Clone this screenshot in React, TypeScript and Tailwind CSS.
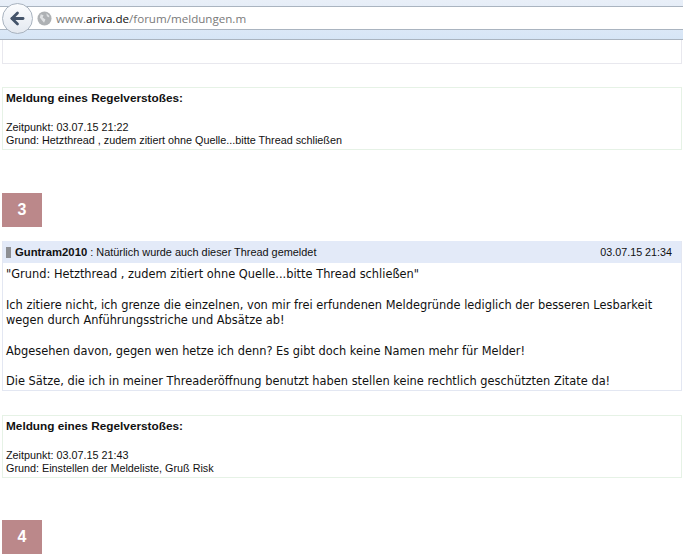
import { ArrowLeft } from "lucide-react";

const sans = "font-['Liberation_Sans',Arial,sans-serif]";

function Report({ time, reason }: { time: string; reason: string }) {
  return (
    <div className={`ml-[2px] mr-[1px] h-[63px] border border-[#e6f2e6] px-[3px] pt-[3px] text-[10.8px] leading-[13px] text-[#111] ${sans}`}>
      <div className="text-[11.8px] font-bold leading-[14px]">Meldung eines Regelverstoßes:</div>
      <div className="mt-[16px]">Zeitpunkt: {time}</div>
      <div>Grund: {reason}</div>
    </div>
  );
}

function Badge({ n }: { n: number }) {
  return (
    <div className={`ml-[2px] flex h-[34px] w-[40px] items-center justify-center bg-[#bb888a] text-[16px] font-bold text-white ${sans}`}>
      {n}
    </div>
  );
}

export default function App() {
  return (
    <div className="h-[559px] w-[683px] overflow-hidden bg-white">
      {/* browser bar */}
      <div className="relative h-[40px] bg-gradient-to-b from-[#e9eff8] to-[#d6e5f6] pt-[6px]">
        <div className="flex h-[24px] items-center border-y border-[#aab4c0] bg-white pl-[37px]">
          <svg width="15" height="15" viewBox="0 0 16 16" className="mr-[4px]">
            <circle cx="8" cy="8" r="7.5" fill="#aeb1b4" />
            <path d="M4 3.5l3 1-1 2.5 3 2-1.5 3.5-2-2.5-2.5-3zM10 2.5l3 2.5v2l-2.5-1.5z" fill="#dfe1e3" />
          </svg>
          <span className="pt-[1px] font-['Open_Sans',sans-serif] text-[11.6px] text-[#7a7a7a]">
            www.<span className="text-[#111]">ariva.de</span>/forum/meldungen.m
          </span>
        </div>
        <div className="absolute left-[2px] top-[3px] flex h-[31px] w-[31px] items-center justify-center rounded-full border border-[#a9b3bf] bg-gradient-to-b from-[#fbfcfe] to-[#e4e9f0]">
          <ArrowLeft size={19} strokeWidth={3.5} className="text-[#44546a]" />
        </div>
        <div className="absolute inset-x-0 bottom-0 h-px bg-[#aab4c0]" />
      </div>

      <div className="ml-[2px] mr-[1px] h-[24px] border border-t-0 border-[#e8e8ee]" />

      <div className="mt-[23px]">
        <Report time="03.07.15 21:22" reason="Hetzthread , zudem zitiert ohne Quelle...bitte Thread schließen" />
      </div>

      <div className="mt-[43px]">
        <Badge n={3} />
      </div>

      {/* post */}
      <div className="ml-[2px] mr-[1px] mt-[14px] h-[150px] border-x border-b border-[#e3e7f2]">
        <div className={`flex h-[22px] items-center bg-[#e3eaf8] pl-[3px] pr-[9px] text-[10.75px] text-[#111] ${sans}`}>
          <span className="mr-[4px] h-[11px] w-[5px] bg-[#8d8f93]" />
          <span className="text-[11.3px] font-bold">Guntram2010</span>
          <span className="ml-[3px] text-[10.9px]">: Natürlich wurde auch dieser Thread gemeldet</span>
          <span className="ml-auto">03.07.15 21:34</span>
        </div>
        <div className="px-[3px] pt-[4px] font-['DejaVu_Sans',sans-serif] text-[11.4px] leading-[15.33px] text-[#111]">
          <p>"Grund: Hetzthread , zudem zitiert ohne Quelle...bitte Thread schließen"</p>
          <p className="mt-[15.33px]">
            Ich zitiere nicht, ich grenze die einzelnen, von mir frei erfundenen Meldegründe lediglich der besseren Lesbarkeit wegen durch Anführungsstriche und Absätze ab!
          </p>
          <p className="mt-[15.33px]">Abgesehen davon, gegen wen hetze ich denn? Es gibt doch keine Namen mehr für Melder!</p>
          <p className="mt-[15.33px]">Die Sätze, die ich in meiner Threaderöffnung benutzt haben stellen keine rechtlich geschützten Zitate da!</p>
        </div>
      </div>

      <div className="mt-[24px]">
        <Report time="03.07.15 21:43" reason="Einstellen der Meldeliste, Gruß Risk" />
      </div>

      <div className="mt-[42px]">
        <Badge n={4} />
      </div>
    </div>
  );
}
